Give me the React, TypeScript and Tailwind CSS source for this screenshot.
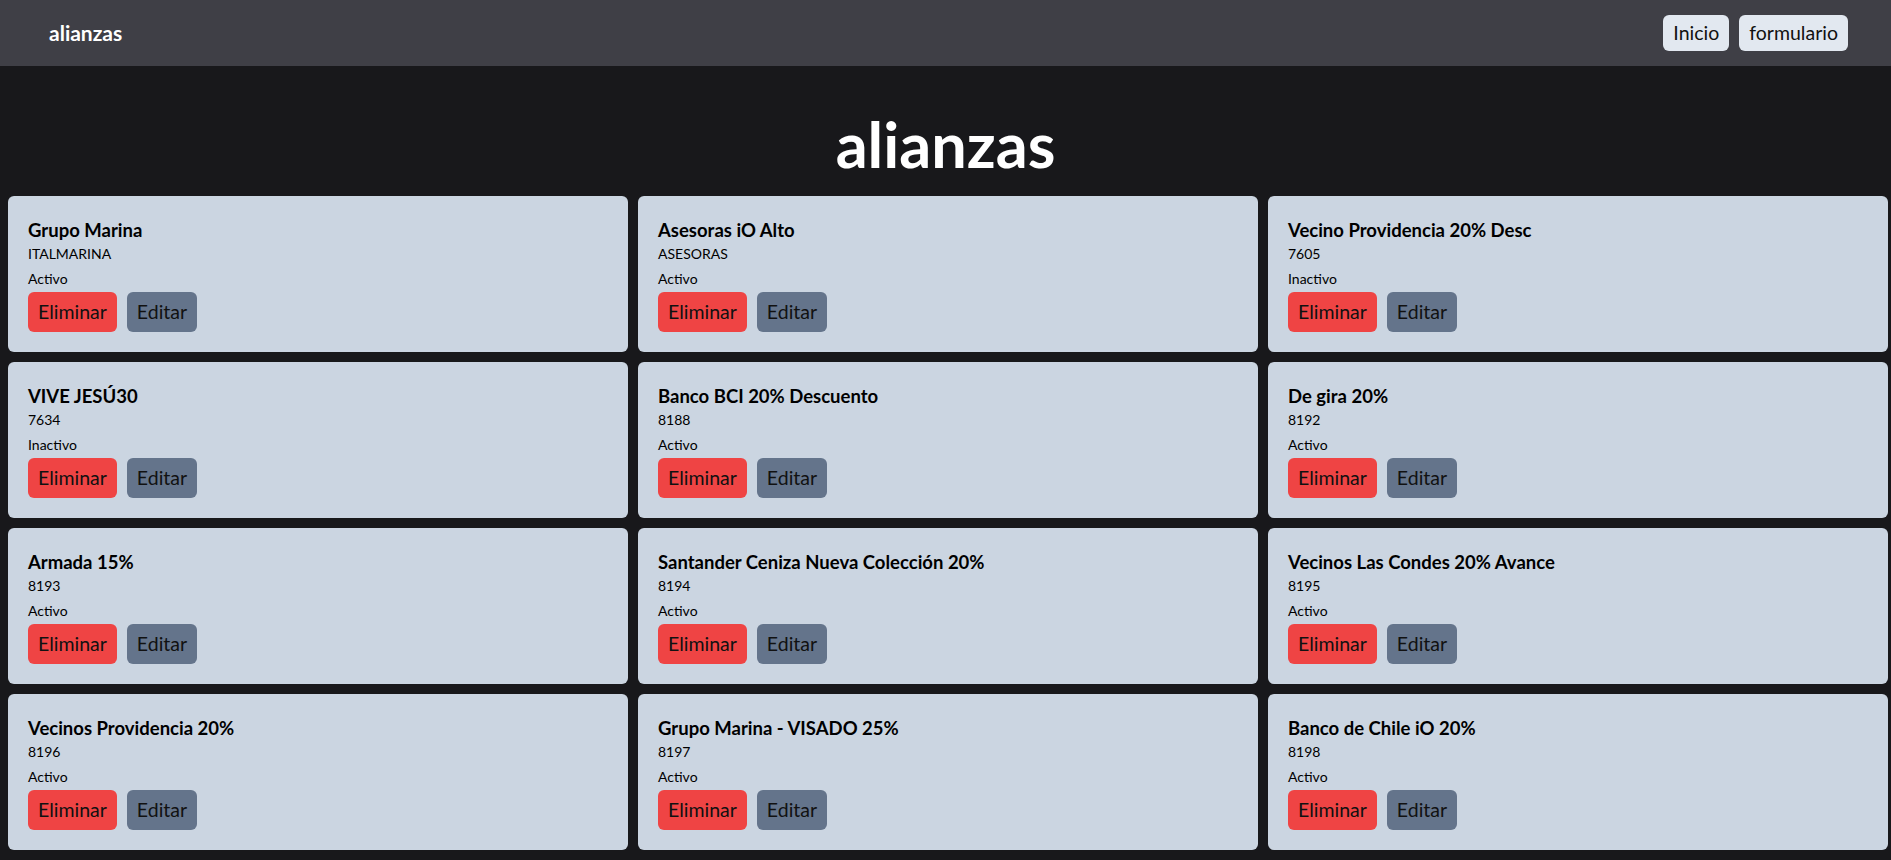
import React from "react";

type Item = { name: string; code: string; active: boolean };

const items: Item[] = [
  { name: "Grupo Marina", code: "ITALMARINA", active: true },
  { name: "Asesoras iO Alto", code: "ASESORAS", active: true },
  { name: "Vecino Providencia 20% Desc", code: "7605", active: false },
  { name: "VIVE JESÚ30", code: "7634", active: false },
  { name: "Banco BCI 20% Descuento", code: "8188", active: true },
  { name: "De gira 20%", code: "8192", active: true },
  { name: "Armada 15%", code: "8193", active: true },
  { name: "Santander Ceniza Nueva Colección 20%", code: "8194", active: true },
  { name: "Vecinos Las Condes 20% Avance", code: "8195", active: true },
  { name: "Vecinos Providencia 20%", code: "8196", active: true },
  { name: "Grupo Marina - VISADO 25%", code: "8197", active: true },
  { name: "Banco de Chile iO 20%", code: "8198", active: true },
  { name: "Banco Estado 15%", code: "8199", active: true },
  { name: "Vecinos Vitacura 20%", code: "8200", active: true },
  { name: "Grupo Marina 10%", code: "8201", active: true },
];

const font = { fontFamily: '"Segoe UI", Lato, "Noto Sans", sans-serif' };

function Card({ item }: { item: Item }) {
  return (
    <div className="bg-[#cbd5e1] rounded-md p-5 text-black">
      <h2 className="text-[18.5px] font-bold leading-7">{item.name}</h2>
      <p className="text-sm leading-5">{item.code}</p>
      <p className="text-sm leading-5 mt-[5px] mb-[3px]">{item.active ? "Activo" : "Inactivo"}</p>
      <div className="flex gap-2.5">
        <button className="bg-[#ef4444] rounded-md px-2.5 py-1.5 text-[19.5px] leading-7 text-[#111]">
          Eliminar
        </button>
        <button className="bg-[#64748b] rounded-md px-2.5 py-1.5 text-[19.5px] leading-7 text-[#111]">
          Editar
        </button>
      </div>
    </div>
  );
}

export default function App() {
  return (
    <div className="min-h-screen bg-[#18181b]" style={font}>
      <header className="h-[66px] bg-[#3f3f46] flex items-center justify-between pl-[49px] pr-[43px]">
        <span className="text-white font-bold text-[21px]">alianzas</span>
        <nav className="flex gap-2.5">
          <button className="bg-[#e2e8f0] rounded-md px-2.5 py-1 text-[19.5px] leading-7 text-[#111]">Inicio</button>
          <button className="bg-[#e2e8f0] rounded-md px-2.5 py-1 text-[19.5px] leading-7 text-[#111]">formulario</button>
        </nav>
      </header>
      <main>
        <h1 className="text-white font-bold text-[63px] leading-[60px] text-center pt-[48px] mb-[22px]">
          alianzas
        </h1>
        <div className="grid grid-cols-3 gap-2.5 pl-2 pr-[3px] pb-4">
          {items.map((it, i) => (
            <Card key={i} item={it} />
          ))}
        </div>
      </main>
    </div>
  );
}
